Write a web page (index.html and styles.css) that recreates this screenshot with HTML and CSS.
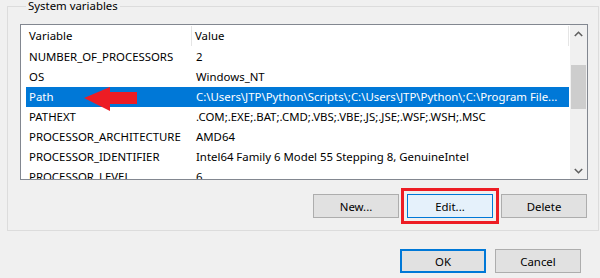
FILE: index.html
```html
<!DOCTYPE html>
<html>
<head>
<meta charset="utf-8">
<link rel="stylesheet" href="styles.css">
</head>
<body>
<fieldset class="group">
  <legend class="group-title">System variables</legend>
  <div class="listbox">
    <div class="list-main">
      <div class="list-header">
        <div class="hcell hcell-var">Variable</div>
        <div class="hcell hcell-val">Value</div>
      </div>
      <div class="rows">
        <div class="row"><span class="c1">NUMBER_OF_PROCESSORS</span><span class="c2">2</span></div>
        <div class="row"><span class="c1">OS</span><span class="c2">Windows_NT</span></div>
        <div class="row selected"><span class="c1">Path</span><span class="c2">C:\Users\JTP\Python\Scripts\;C:\Users\JTP\Python\;C:\Program File...</span></div>
        <div class="row"><span class="c1">PATHEXT</span><span class="c2">.COM;.EXE;.BAT;.CMD;.VBS;.VBE;.JS;.JSE;.WSF;.WSH;.MSC</span></div>
        <div class="row"><span class="c1">PROCESSOR_ARCHITECTURE</span><span class="c2">AMD64</span></div>
        <div class="row"><span class="c1">PROCESSOR_IDENTIFIER</span><span class="c2">Intel64 Family 6 Model 55 Stepping 8, GenuineIntel</span></div>
        <div class="row"><span class="c1">PROCESSOR_LEVEL</span><span class="c2">6</span></div>
      </div>
    </div>
    <div class="scrollbar">
      <div class="sb-btn">
        <svg width="9" height="6" viewBox="0 0 9 6"><path d="M0.8 5 L4.5 1.3 L8.2 5" fill="none" stroke="#606060" stroke-width="1.6"/></svg>
      </div>
      <div class="sb-track"><div class="sb-thumb"></div></div>
      <div class="sb-btn">
        <svg width="9" height="6" viewBox="0 0 9 6"><path d="M0.8 1 L4.5 4.7 L8.2 1" fill="none" stroke="#606060" stroke-width="1.6"/></svg>
      </div>
    </div>
  </div>
  <div class="btn-row">
    <button class="btn">New...</button>
    <button class="btn btn-focus btn-marked">Edit...</button>
    <button class="btn">Delete</button>
  </div>
</fieldset>
<div class="dialog-buttons">
  <button class="btn btn-default">OK</button>
  <button class="btn">Cancel</button>
</div>
<svg class="red-arrow" width="54" height="26" viewBox="0 0 54 26">
  <polygon points="0,12 26,1 26,6 53,6 53,18 26,18 26,25" fill="#ed1c24"/>
</svg>
</body>
</html>
```
FILE: styles.css
```css
html, body {
  margin: 0;
  padding: 0;
}
body {
  width: 600px;
  height: 278px;
  overflow: hidden;
  background: #f0f0f0;
  font-family: "Noto Sans", "Open Sans", sans-serif;
  font-size: 11.4px;
  color: #000;
  position: relative;
}
.group {
  margin: 0 1px 0 7px;
  padding: 12px 10px 12px 12px;
  border: 1px solid #dcdcdc;
  min-width: 0;
}
.group-title {
  padding: 0 2px;
  margin-left: 6px;
  line-height: 12px;
}
.listbox {
  display: flex;
  height: 154px;
  border: 1px solid #828790;
  background: #fff;
  overflow: hidden;
}
.list-main {
  flex: 1;
  min-width: 0;
  overflow: hidden;
}
.list-header {
  display: grid;
  grid-template-columns: 171px 1fr;
  height: 22px;
  align-items: stretch;
}
.hcell {
  white-space: nowrap;
  margin: 1px 0;
  line-height: 20px;
  border-right: 1px solid #e5e5e5;
}
.hcell-var {
  padding-left: 8px;
}
.hcell-val {
  padding-left: 3px;
}
.row {
  display: grid;
  grid-template-columns: 166px 1fr;
  margin-left: 5px;
  height: 20px;
  line-height: 20px;
  white-space: nowrap;
}
.row .c1 {
  padding-left: 3px;
  overflow: hidden;
}
.row .c2 {
  padding-left: 4px;
  overflow: hidden;
}
.row.selected {
  background: #0078d7;
  color: #fff;
}
.scrollbar {
  width: 17px;
  margin-left: 1px;
  background: #f0f0f0;
  display: flex;
  flex-direction: column;
}
.sb-btn {
  height: 17px;
  display: flex;
  align-items: center;
  justify-content: center;
}
.sb-track {
  flex: 1;
  padding: 23px 1px 0 1px;
}
.sb-thumb {
  height: 44px;
  background: #cdcdcd;
}
.btn-row {
  display: flex;
  justify-content: flex-end;
  gap: 8px;
  margin-top: 14px;
  padding-right: 1px;
}
.btn {
  width: 86px;
  height: 24px;
  border: 1px solid #adadad;
  background: #e1e1e1;
  font-family: inherit;
  font-size: 11.4px;
  color: #000;
  padding: 0;
  margin: 0;
}
.btn-focus {
  background: #e5f1fb;
  border-color: #0078d7;
}
.btn-marked {
  outline: 3px solid #ed1c24;
  outline-offset: 3px;
}
.btn-default {
  border: 2px solid #0078d7;
}
.dialog-buttons {
  display: flex;
  justify-content: flex-end;
  gap: 9px;
  margin-top: 18px;
  padding-right: 19px;
}
.red-arrow {
  position: absolute;
  left: 84px;
  top: 86px;
}
```
